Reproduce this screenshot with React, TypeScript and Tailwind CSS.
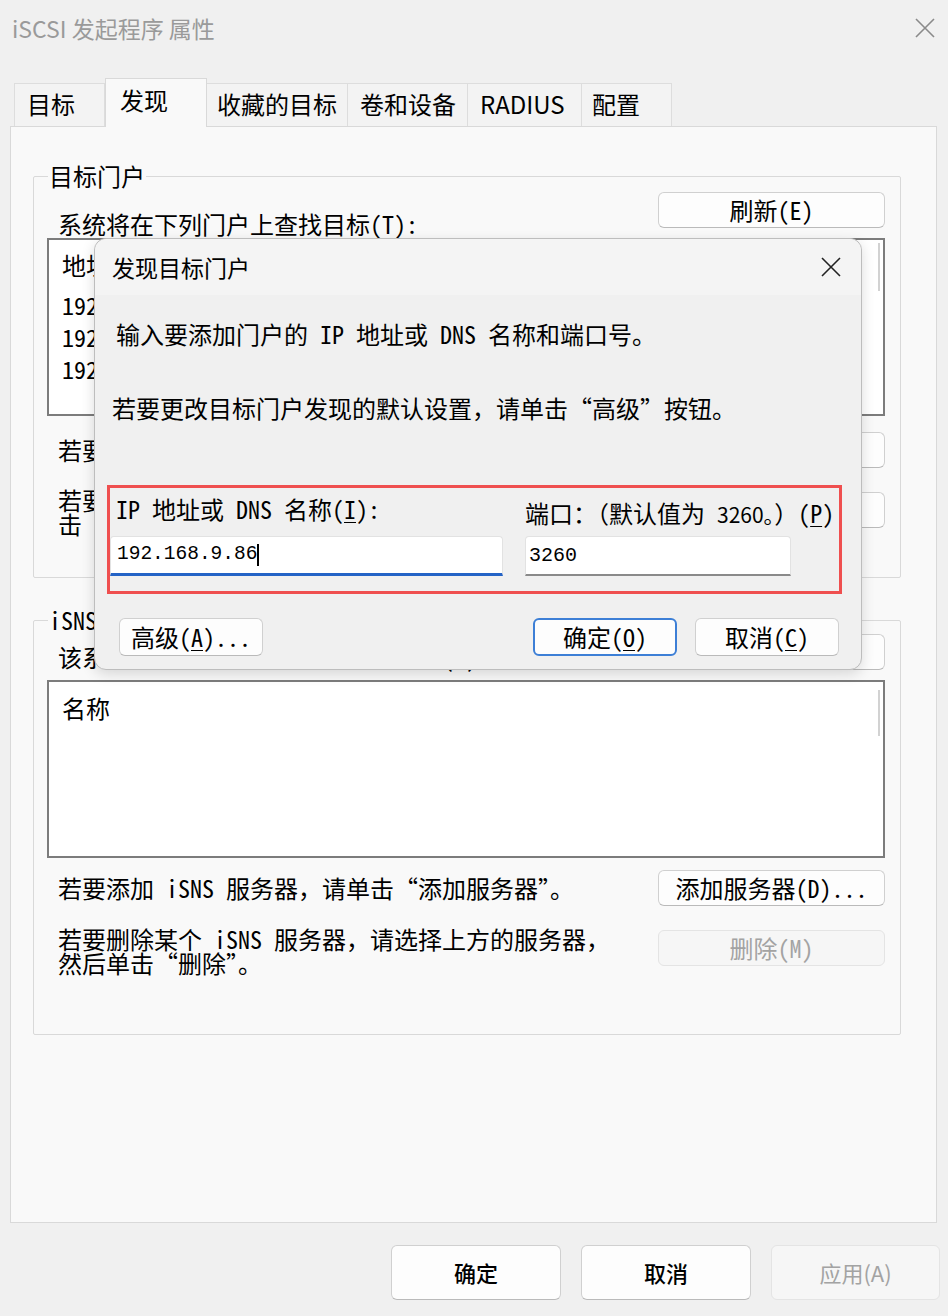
import React from "react";

const UI = "font-['Noto_Sans_CJK_SC','Noto_Sans',sans-serif]";
const SONG = "font-['Noto_Sans_Mono_CJK_SC','Liberation_Mono','Noto_Sans_CJK_SC',monospace]";

interface IBtn {
  children: React.ReactNode;
  className?: string;
  disabled?: boolean;
  primary?: boolean;
}

const WinButton: React.FC<IBtn> = ({ children, className = "", disabled = false, primary = false }: IBtn) => {
  let tone = "bg-[#fdfdfd] border border-[#d0d0d0] border-b-[#bababa] text-black";
  if (primary) tone = "bg-[#fdfdfd] border-2 border-[#3d7fd6] text-black";
  if (disabled) tone = "bg-[#f6f6f6] border border-[#e4e4e4] text-[#a3a3a3]";
  return (
    <div className={`flex items-center justify-center rounded-[6px] shrink-0 ${tone} ${className}`}>
      {children}
    </div>
  );
};

const U = ({ c }: { c: string }) => <span className="underline underline-offset-[3px] decoration-1">{c}</span>;

const tabs = [
  { label: "目标", w: "w-[91px]" },
  { label: "发现", w: "w-[102px]" },
  { label: "收藏的目标", w: "w-[141px]" },
  { label: "卷和设备", w: "w-[120px]" },
  { label: "RADIUS", w: "w-[114px]" },
  { label: "配置", w: "w-[90px]" },
];

const portals = ["192.168.9.80", "192.168.9.81", "192.168.9.82"];

const CloseIcon = ({ size, color }: { size: number; color: string }) => (
  <svg width={size} height={size} viewBox="0 0 22 22">
    <path d="M2 2L20 20M20 2L2 20" stroke={color} strokeWidth="1.6" fill="none" />
  </svg>
);

const GroupBox = ({ title, className = "", children }: { title: string; className?: string; children: React.ReactNode }) => (
  <div className={`relative ml-[22px] w-[868px] border border-[#d9d9d9] rounded-[2px] ${className}`}>
    <div className="absolute left-[14px] top-[-14px] px-[1px] bg-[#f9f9f9] text-[24px] leading-[26px] text-black">
      {title}
    </div>
    {children}
  </div>
);

const App: React.FC = () => {
  return (
    <div className={`relative w-[948px] h-[1316px] overflow-hidden bg-[#f0f0f0] ${UI}`}>
      {/* title bar */}
      <div className="h-[56px] flex items-center justify-between px-[12px]">
        <span className="text-[23px] leading-none text-[#9a9a9a]">iSCSI 发起程序 属性</span>
        <CloseIcon size={22} color="#8a8a8a" />
      </div>

      {/* tabs */}
      <div className="mt-[22px] h-[48px] pl-[14px] flex items-end">
        {tabs.map((t, i) =>
          i === 1 ? (
            <div
              key={t.label}
              className={`${t.w} h-[49px] mb-[-1px] relative z-10 bg-[#f9f9f9] border border-b-0 border-[#d9d9d9] flex items-center pl-[14px] pb-[7px] text-[24px] text-black`}
            >
              {t.label}
            </div>
          ) : (
            <div
              key={t.label}
              className={`${t.w} h-[43px] bg-[#f3f3f3] border-t border-r border-[#dddddd] ${i === 0 ? "border-l" : ""} flex items-center ${i === 2 || i === 5 ? "pl-[10px]" : "pl-[12px]"} pb-[3px] text-[24px] text-black`}
            >
              {t.label}
            </div>
          )
        )}
      </div>

      {/* tab panel */}
      <div className={`ml-[10px] w-[927px] h-[1097px] bg-[#f9f9f9] border border-[#d9d9d9] ${SONG} text-[24px] text-black`}>
        <GroupBox title="目标门户" className="mt-[49px] h-[402px]">
          <div className="pt-[15px] pl-[13px] pr-[15px]">
            <div className="h-[46px] flex justify-between">
              <div className="ml-[11px] mt-[20px] leading-[24px]">系统将在下列门户上查找目标(T):</div>
              <WinButton className="w-[227px] h-[36px]">刷新(E)</WinButton>
            </div>
            <div className="relative h-[178px] bg-white border-2 border-[#7c7c7c] pl-[13px] pt-[13px]">
              <div className="absolute right-[3px] top-[3px] w-[2px] h-[48px] bg-[#d2d2d2]" />
              <div className="leading-[24px] mb-[12px]">地址</div>
              {portals.map((p) => (
                <div key={p} className="leading-[32px]">
                  {p}
                </div>
              ))}
            </div>
            <div className="mt-[16px] h-[36px] flex justify-between items-center">
              <div className="ml-[11px] leading-[24px]">若要添加目标门户，请单击“发现门户”。</div>
              <WinButton className="w-[227px] h-[36px]">发现门户(P)...</WinButton>
            </div>
            <div className="mt-[24px] flex justify-between items-start">
              <div className="ml-[11px] mt-[-4px] leading-[24px]">
                若要删除某个目标门户，请选择上方的地址，然后单
                <br />
                击“删除”。
              </div>
              <WinButton className="w-[227px] h-[36px]">删除(R)</WinButton>
            </div>
          </div>
        </GroupBox>

        <GroupBox title="iSNS 服务器" className="mt-[42px] h-[415px]">
          <div className="pt-[13px] pl-[13px] pr-[15px]">
            <div className="h-[46px] flex justify-between">
              <div className="ml-[11px] mt-[11px] leading-[24px]">该系统已在下列 iSNS 服务器上注册(I):</div>
              <WinButton className="w-[227px] h-[36px]">刷新(F)</WinButton>
            </div>
            <div className="relative h-[178px] bg-white border-2 border-[#7c7c7c] pl-[13px] pt-[14px]">
              <div className="absolute right-[3px] top-[8px] w-[2px] h-[46px] bg-[#d2d2d2]" />
              <div className="leading-[24px]">名称</div>
            </div>
            <div className="mt-[12px] h-[36px] flex justify-between items-center">
              <div className="ml-[11px] leading-[24px]">若要添加 iSNS 服务器，请单击“添加服务器”。</div>
              <WinButton className="w-[227px] h-[36px]">添加服务器(D)...</WinButton>
            </div>
            <div className="mt-[24px] flex justify-between items-start">
              <div className="ml-[11px] mt-[-3px] leading-[24px]">
                若要删除某个 iSNS 服务器，请选择上方的服务器，
                <br />
                然后单击“删除”。
              </div>
              <WinButton disabled className="w-[227px] h-[36px]">删除(M)</WinButton>
            </div>
          </div>
        </GroupBox>
      </div>

      {/* bottom buttons */}
      <div className="mt-[22px] pr-[8px] flex justify-end gap-[20px] text-[22px] font-medium">
        <WinButton className="w-[170px] h-[55px]">确定</WinButton>
        <WinButton className="w-[170px] h-[55px]">取消</WinButton>
        <WinButton disabled className="w-[169px] h-[55px] font-normal">应用(A)</WinButton>
      </div>

      {/* modal dialog */}
      <div
        className={`absolute left-[94px] top-[238px] z-20 w-[768px] h-[432px] rounded-[12px] bg-[#f0f0f0] border border-[#bdbdbd] shadow-[0_4px_14px_rgba(0,0,0,0.14)] ${SONG} text-[24px] text-black`}
      >
        <div className={`h-[56px] rounded-t-[12px] bg-[#f4f4f4] flex items-center justify-between pl-[17px] pr-[19px] ${UI}`}>
          <span className="text-[23px] leading-none">发现目标门户</span>
          <CloseIcon size={22} color="#222" />
        </div>
        <div className="mt-[27px] pl-[21px] leading-[24px]">输入要添加门户的 IP 地址或 DNS 名称和端口号。</div>
        <div className="mt-[50px] pl-[17px] leading-[24px]">若要更改目标门户发现的默认设置，请单击“高级”按钮。</div>

        <div className="mt-[65px] ml-[12px] w-[735px] border-[3px] border-[#ef4f4f] pt-[9px] pb-[15px] flex gap-[22px]">
          <div className="w-[393px]">
            <div className="pl-[6px] h-[24px] leading-[24px]">
              IP 地址或 DNS 名称(<U c="I" />):
            </div>
            <div className="mt-[15px] h-[40px] bg-white border border-[#e2e2e2] border-b-[3px] border-b-[#2463c6] rounded-t-[4px] flex items-center pl-[6px]">
              <span className="font-['Liberation_Mono',monospace] text-[19.5px] leading-none">192.168.9.86</span>
              <span className="inline-block w-[2px] h-[22px] bg-black" />
            </div>
          </div>
          <div className="flex-1">
            <div className="mt-[4px] mb-[-4px] h-[24px] leading-[24px] whitespace-nowrap">
              端口：（默认值为 <span className={`${UI} text-[21px]`}>3260。</span>）(<U c="P" />)
            </div>
            <div className="mt-[15px] w-[266px] h-[40px] bg-white border border-[#e2e2e2] border-b-2 border-b-[#8a8a8a] rounded-t-[4px] flex items-center pl-[3px]">
              <span className="font-['Liberation_Mono',monospace] text-[20px] leading-none">3260</span>
            </div>
          </div>
        </div>

        <div className="mt-[24px] pl-[24px] pr-[22px] flex items-center">
          <WinButton className="w-[144px] h-[38px]">
            高级(<U c="A" />)...
          </WinButton>
          <WinButton primary className="ml-auto w-[144px] h-[38px]">
            确定(<U c="O" />)
          </WinButton>
          <WinButton className="ml-[18px] w-[144px] h-[38px]">
            取消(<U c="C" />)
          </WinButton>
        </div>
      </div>
    </div>
  );
};

export default App;
